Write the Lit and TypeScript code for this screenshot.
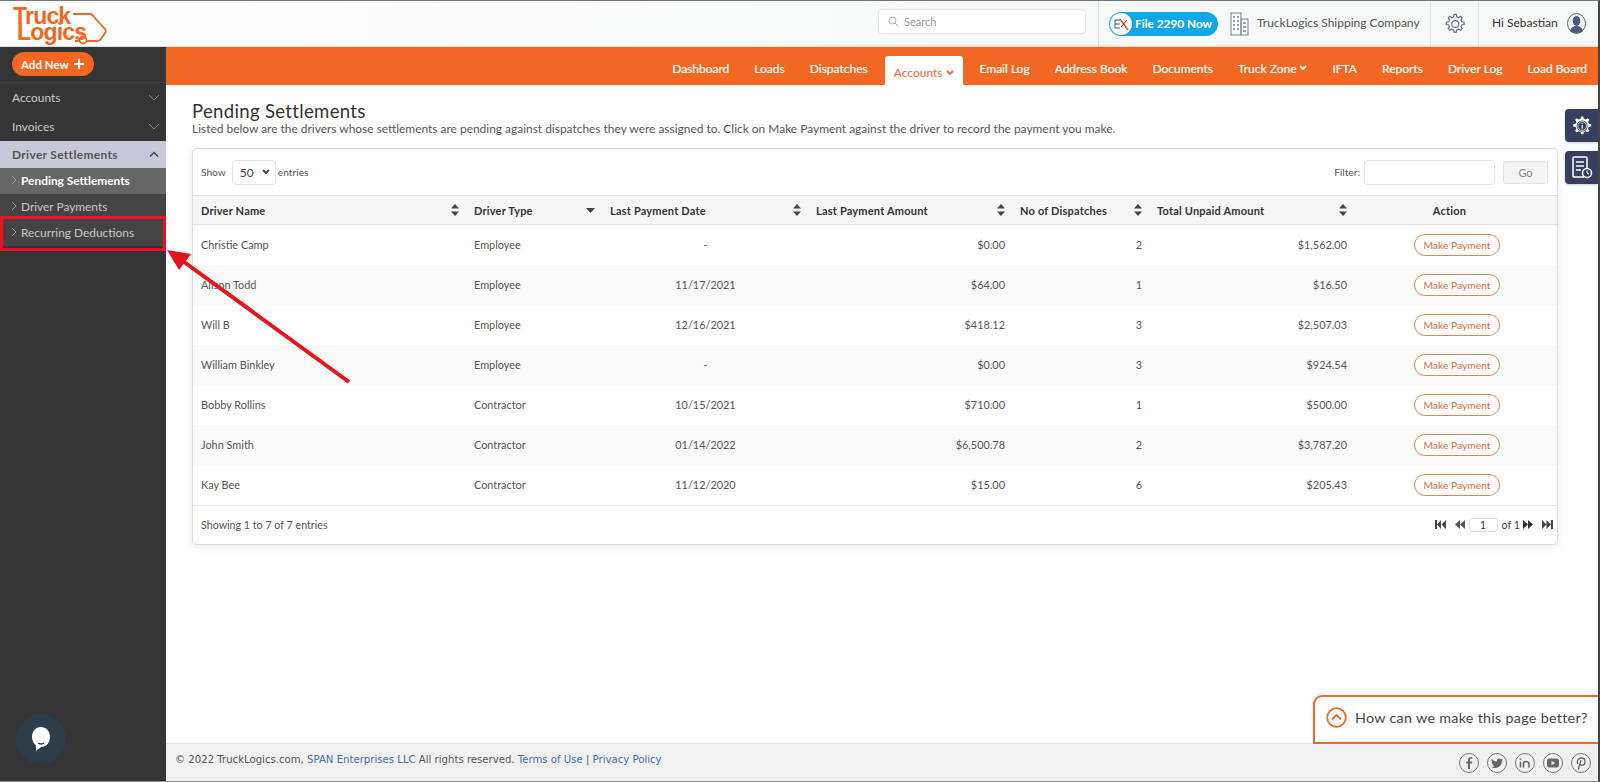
import { LitElement, html, css, svg } from "lit";
import { customElement } from "lit/decorators.js";

const chevDown = html`<svg class="chev" width="12" height="7" viewBox="0 0 12 7"><path d="M1 1l5 5 5-5" fill="none" stroke="currentColor" stroke-width="1"/></svg>`;
const chevUp = html`<svg class="chev" width="12" height="7" viewBox="0 0 12 7"><path d="M2 5.500l4-4 4 4" fill="none" stroke="currentColor" stroke-width="1.500"/></svg>`;
const caret = html`<svg width="8" height="6" viewBox="0 0 8 6"><path d="M1 1l3 3 3-3" fill="none" stroke="currentColor" stroke-width="1.800"/></svg>`;
const sortBoth = html`<svg width="8" height="12" viewBox="0 0 8 12"><path d="M4 0l4 4.500H0zM4 12l4-4.500H0z" fill="#444"/></svg>`;
const sortDown = html`<svg width="9" height="5" viewBox="0 0 9 5"><path d="M0 0h9L4.500 5z" fill="#444"/></svg>`;
const arrowSub = html`<svg width="6" height="10" viewBox="0 0 6 10"><path d="M1 1l4 4-4 4" fill="none" stroke="#999" stroke-width="1"/></svg>`;

const gear = svg`<path d="M10 1.500h2.500l.5 2.500 2 .9 2.200-1.400 1.800 1.800-1.400 2.200.9 2 2.500.5v2.500l-2.500.5-.9 2 1.400 2.200-1.800 1.800-2.200-1.400-2 .9-.5 2.500H10l-.5-2.500-2-.9-2.200 1.400-1.800-1.800 1.400-2.200-.9-2-2.500-.5v-2.500l2.500-.5.9-2-1.400-2.200 1.800-1.800 2.200 1.400 2-.9z" />`;

const rows = [
  ["Christie Camp", "Employee", "-", "$0.00", "2", "$1,562.00"],
  ["Alison Todd", "Employee", "11/17/2021", "$64.00", "1", "$16.50"],
  ["Will B", "Employee", "12/16/2021", "$418.12", "3", "$2,507.03"],
  ["William Binkley", "Employee", "-", "$0.00", "3", "$924.54"],
  ["Bobby Rollins", "Contractor", "10/15/2021", "$710.00", "1", "$500.00"],
  ["John Smith", "Contractor", "01/14/2022", "$6,500.78", "2", "$3,787.20"],
  ["Kay Bee", "Contractor", "11/12/2020", "$15.00", "6", "$205.43"],
];

const heads: [string, any][] = [
  ["Driver Name", sortBoth],
  ["Driver Type", sortDown],
  ["Last Payment Date", sortBoth],
  ["Last Payment Amount", sortBoth],
  ["No of Dispatches", sortBoth],
  ["Total Unpaid Amount", sortBoth],
];

const navItems: [string, boolean, boolean][] = [
  ["Dashboard", false, false],
  ["Loads", false, false],
  ["Dispatches", false, false],
  ["Accounts", true, true],
  ["Email Log", false, false],
  ["Address Book", false, false],
  ["Documents", false, false],
  ["Truck Zone", true, false],
  ["IFTA", false, false],
  ["Reports", false, false],
  ["Driver Log", false, false],
  ["Load Board", false, false],
];

@customElement("app-root")
export class AppRoot extends LitElement {
  static styles = css`
    :host {
      display: block;
      position: relative;
      width: 1600px;
      height: 782px;
      overflow: hidden;
      box-sizing: border-box;
      background: #fff;
      color: #444;
      font-family: "Lato", "Open Sans", sans-serif;
      font-size: 11.5px;
      border-top: 1px solid #777;
      border-right: 2px solid #444;
      border-bottom: 1px solid #888;
    }
    * { box-sizing: border-box; }
    .page { display: flex; flex-direction: column; height: 100%; }
    .header {
      display: flex; align-items: center; height: 46px; flex: none;
      background: linear-gradient(90deg, #fff, #f7f8f8 60%);
      border-bottom: 1px solid #ddd;
    }
    .logo { position: relative; width: 100px; height: 45px; margin-left: 13px; color: #f26722; }
    .logo svg { position: absolute; left: 0; top: 0; }
    .logo span {
      position: absolute; font-family: "Liberation Sans", sans-serif; font-weight: 700;
      font-size: 23px; line-height: 16px; letter-spacing: -0.8px;
    }
    .logo .l1 { left: 0; top: 7px; }
    .logo .l2 { left: 4px; top: 23px; }
    .search {
      margin: 0 0 5px auto; width: 208px; height: 25px; display: flex; align-items: center; gap: 5px;
      padding-left: 9px; background: #fff; border: 1px solid #e4e4e4; border-radius: 4px; color: #999; font-size: 11px;
    }
    .hdiv { width: 1px; height: 45px; background: #e2e2e2; flex: none; }
    .hdiv.first { margin-left: 12px; }
    .pill {
      margin-left: 10px; width: 109px; height: 24px; border-radius: 12px; background: #10a7e8; color: #fff;
      display: flex; align-items: center; gap: 3px; font-size: 11.8px; font-weight: 700; padding-left: 1px; white-space: nowrap;
    }
    .pill .ic { width: 22px; height: 22px; border-radius: 50%; background: #fff; flex: none; }
    .bld { margin-left: 12px; flex: none; }
    .company { margin: 0 0 2px 8px; width: 173px; font-size: 12px; color: #555; white-space: nowrap; }
    .gear { width: 47px; display: flex; justify-content: center; color: #667; }
    .hi { margin: 0 0 3px 13px; width: 75px; font-size: 12px; color: #333; white-space: nowrap; }
    .avatar { margin-right: 12px; flex: none; }
    .body { flex: 1; display: flex; min-height: 0; }
    .side { width: 166px; flex: none; background: #353535; color: #ccc; display: flex; flex-direction: column; font-size: 11.9px; }
    .addwrap { height: 36px; padding: 5px 0 0 12px; border-bottom: 1px solid #3d3d3d; }
    .add {
      width: 82px; height: 24px; border-radius: 12px; background: #f26722; color: #fff; font-weight: 700; font-size: 11.5px;
      display: flex; align-items: center; gap: 5px; padding-left: 9px;
    }
    .sec { height: 29px; display: flex; align-items: center; justify-content: space-between; padding: 0 6px 1px 12px; }
    .sec .chev { color: #888; }
    .sec.open { height: 27px; background: #c8c9d6; color: #555; font-weight: 700; letter-spacing: .35px; padding-bottom: 0; }
    .sec.open .chev { color: #444; }
    .sub { height: 26px; display: flex; align-items: center; gap: 4px; padding: 0 0 2px 11px; background: #444; color: #c8c8c8; }
    .sub.on { background: #666; color: #fff; font-weight: 700; }
    .chat { margin: auto 0 17px 16px; width: 50px; height: 50px; border-radius: 50%; background: #2d3d4a; display: flex; align-items: center; justify-content: center; }
    .main { flex: 1; display: flex; flex-direction: column; min-width: 0; }
    .nav { height: 38px; flex: none; background: #f26722; display: flex; justify-content: flex-end; align-items: flex-end; gap: 25px; padding-right: 11px; color: #fff; font-size: 12px; -webkit-text-stroke: 0.2px #fff; }
    .nav a { height: 38px; padding-top: 4px; display: flex; align-items: center; gap: 3px; white-space: nowrap; }
    .nav a.active { background: #fff; color: #e8683a; -webkit-text-stroke: 0; height: 29px; padding: 4px 9px 0; border-radius: 3px 3px 0 0; margin: 0 -8px 0 -8px; }
    .content { flex: 1; padding: 16px 40px 0 26px; min-height: 0; }
    h1 { margin: 0; font-size: 18.6px; line-height: 21px; font-weight: 400; color: #333; letter-spacing: 0.3px; }
    .desc { margin: 0 0 12px; font-size: 11.95px; line-height: 14px; color: #555; white-space: nowrap; }
    .card { border: 1px solid #ddd; border-radius: 5px; box-shadow: 0 3px 8px rgba(0,0,0,.08); background: #fff; }
    .tools { height: 46px; display: flex; align-items: center; padding: 0 9px 0 8px; gap: 6px; font-size: 10.2px; color: #555; }
    .sel { width: 44px; height: 25px; border: 1px solid #e2e2e2; border-radius: 4px; display: flex; align-items: center; justify-content: space-between; padding: 0 5px 0 7px; font-size: 12px; color: #444; }
    .ent { margin-left: -4px; }
    .tools .spacer { flex: 1; }
    .filter { width: 131px; height: 25px; border: 1px solid #e2e2e2; border-radius: 4px; margin-left: -2px; }
    .go { width: 45px; height: 23px; margin-left: 2px; border: 1px solid #e2e2e2; border-radius: 3px; background: #f4f4f4; color: #888; display: flex; align-items: center; justify-content: center; font-size: 11px; }
    table { width: 100%; border-collapse: collapse; table-layout: fixed; font-size: 10.9px; color: #555; }
    th { height: 29px; background: #f6f6f6; border-top: 1px solid #e2e2e2; border-bottom: 1px solid #e2e2e2; padding: 0 7px 0 8px; font-size: 11px; font-weight: 700; color: #333; text-align: left; letter-spacing: 0.2px; }
    th .in { display: flex; align-items: center; justify-content: space-between; white-space: nowrap; }
    th.act { text-align: center; padding-right: 20px; }
    td { height: 40px; padding: 0 7px 0 8px; white-space: nowrap; }
    tr:nth-child(even) td { background: #f9f9f9; }
    td.c { text-align: center; }
    td.act { text-align: left; padding: 0 0 0 60px; }
    td.r { text-align: right; }
    .btn { display: inline-flex; align-items: center; justify-content: center; width: 86px; height: 22px; border: 1px solid #e2825a; border-radius: 11px; color: #e0673a; font-size: 10.3px; background: #fff; }
    .foot { height: 39px; border-top: 1px solid #e8e8e8; display: flex; align-items: center; justify-content: space-between; padding: 0 4px 0 8px; font-size: 10.7px; color: #555; }
    .pager { display: flex; align-items: center; gap: 6px; color: #444; }
    .pg2 { margin-left: 3px; }
    .pg3 { margin-left: -3px; }
    .pager .box { width: 29px; height: 14px; border: 1px solid #ddd; border-radius: 3px; text-align: center; line-height: 12px; font-size: 11px; margin-left: -2px; }
    .foot .of { margin-left: -2px; }
    .footer { height: 38px; flex: none; background: #f0f0f0; border-top: 1px solid #e4e4e4; display: flex; align-items: center; justify-content: space-between; padding: 0 7px 0 9px; font-family: "DejaVu Sans", sans-serif; font-size: 10.15px; color: #555; white-space: nowrap; }
    .footer .txt { margin-bottom: 6px; }
    .footer b { font-weight: 400; color: #3f6fa8; }
    .social { display: flex; gap: 8px; margin-top: 1px; }
    .float { position: absolute; right: 0; width: 33px; height: 33px; background: #35405e; border-radius: 4px 0 0 4px; display: flex; align-items: center; justify-content: center; box-shadow: 0 1px 3px rgba(0,0,0,.2); }
    .f1 { top: 108px; }
    .f2 { top: 150px; }
    .feedback { position: absolute; right: 0; top: 694px; width: 285px; height: 49px; background: #fff; border: 2px solid #ea6a2d; border-right: 0; border-radius: 9px 0 0 0; display: flex; align-items: center; gap: 8px; padding: 0 0 4px 11px; font-size: 14.3px; color: #444; letter-spacing: .3px; white-space: nowrap; }
    .mark { position: absolute; left: 0; top: 215px; width: 166px; height: 35px; border: 3.5px solid #e8141f; }
    .arrow { position: absolute; left: 0; top: 0; pointer-events: none; }
  `;

  render() {
    return html`
      <div class="page">
        <header class="header">
          <div class="logo">
            <svg width="100" height="45" viewBox="0 0 100 45" fill="none" stroke="#f26722" stroke-width="1.800">
              <path d="M60 13h17c2 0 3 1 4 3l11 12c1 1 1 3 0 4l-4 6c-1 2-3 2-5 2H74M62 40h4"/>
              <circle cx="70" cy="39" r="3.500"/>
            </svg>
            <span class="l1">Truck</span><span class="l2">Logics</span>
          </div>
          <div class="search">
            <svg width="11" height="11" viewBox="0 0 11 11" fill="none" stroke="#aaa"><circle cx="4.500" cy="4.500" r="3.500"/><path d="M7 7l3.500 3.500"/></svg>
            Search
          </div>
          <div class="hdiv first"></div>
          <div class="pill">
            <span class="ic"><svg width="22" height="22" viewBox="0 0 22 22"><path d="M5 7h5M5 11h5M5 15h5M5 7v8" stroke="#456" fill="none"/><path d="M10 6l8 11" stroke="#e8541f" stroke-width="1.500"/><path d="M17 7l-6 7" stroke="#333"/></svg></span>
            File 2290 Now
          </div>
          <svg class="bld" width="19" height="24" viewBox="0 0 19 24" fill="none" stroke="#7b8494">
            <rect x="1" y="1" width="10" height="22"/><rect x="11" y="7" width="7" height="16"/>
            <path d="M3 5h2M7 5h2M3 9h2M7 9h2M3 13h2M7 13h2M3 17h2M7 17h2M13 11h3M13 15h3M13 19h3" stroke-width="1.500"/>
          </svg>
          <div class="company">TruckLogics Shipping Company</div>
          <div class="hdiv"></div>
          <div class="gear">
            <svg width="20" height="24" viewBox="0 0 22 24" fill="none" stroke="#667085" stroke-width="1.300">${gear}<circle cx="11.200" cy="12" r="3.800"/></svg>
          </div>
          <div class="hdiv"></div>
          <div class="hi">Hi Sebastian</div>
          <svg class="avatar" width="19" height="21" viewBox="0 0 19 21"><ellipse cx="9.500" cy="10.500" rx="9" ry="10" fill="#eef0f4" stroke="#667"/><ellipse cx="9.500" cy="8" rx="3.800" ry="5" fill="#4d5a78"/><path d="M3 18c1-4 4-5 6.500-5s5.500 1 6.500 5c-2 2.500-11 2.500-13 0z" fill="#4d5a78"/></svg>
        </header>
        <div class="body">
          <aside class="side">
            <div class="addwrap">
              <div class="add">Add New <svg width="10" height="10" viewBox="0 0 10 10"><path d="M5 0v10M0 5h10" stroke="#fff" stroke-width="2"/></svg></div>
            </div>
            <div class="sec">Accounts ${chevDown}</div>
            <div class="sec">Invoices ${chevDown}</div>
            <div class="sec open">Driver Settlements ${chevUp}</div>
            <div class="sub on">${arrowSub} Pending Settlements</div>
            <div class="sub">${arrowSub} Driver Payments</div>
            <div class="sub">${arrowSub} Recurring Deductions</div>
            <div class="chat">
              <svg width="20" height="26" viewBox="0 0 20 26"><path d="M10 1c5 0 9 4 9 10s-4 10-9 10l-5 4v-5.500C2.500 17.500 1 14.500 1 11 1 5 5 1 10 1z" fill="#fff"/><path d="M7 17c1.500 1.200 4.500 1.200 6 0" stroke="#2d3d4a" stroke-width="1.500" fill="none"/></svg>
            </div>
          </aside>
          <div class="main">
            <nav class="nav">
              ${navItems.map(([t, c, a]) => html`<a class=${a ? "active" : ""}>${t}${c ? caret : ""}</a>`)}
            </nav>
            <div class="content">
              <h1>Pending Settlements</h1>
              <p class="desc">Listed below are the drivers whose settlements are pending against dispatches they were assigned to. Click on Make Payment against the driver to record the payment you make.</p>
              <div class="card">
                <div class="tools">
                  Show <div class="sel">50 ${caret}</div> <span class="ent">entries</span>
                  <span class="spacer"></span>
                  Filter: <div class="filter"></div>
                  <div class="go">Go</div>
                </div>
                <table>
                  <colgroup>
                    <col style="width:273px"><col style="width:136px"><col style="width:206px"><col style="width:204px"><col style="width:137px"><col style="width:205px"><col>
                  </colgroup>
                  <thead>
                    <tr>
                      ${heads.map(([t, i]) => html`<th><div class="in">${t}${i}</div></th>`)}
                      <th class="act">Action</th>
                    </tr>
                  </thead>
                  <tbody>
                    ${rows.map((r) => html`<tr>
                      <td>${r[0]}</td><td>${r[1]}</td><td class="c">${r[2]}</td><td class="r">${r[3]}</td><td class="r">${r[4]}</td><td class="r">${r[5]}</td>
                      <td class="act"><span class="btn">Make Payment</span></td>
                    </tr>`)}
                  </tbody>
                </table>
                <div class="foot">
                  <span>Showing 1 to 7 of 7 entries</span>
                  <div class="pager">
                    <svg width="11" height="9" viewBox="0 0 11 9" fill="#444"><path d="M0 0h2v9H0zM6 0v9L2 4.500zM11 0v9L6.500 4.500z"/></svg>
                    <svg class="pg2" width="10" height="9" viewBox="0 0 10 9" fill="#555"><path d="M5 0v9L0 4.500zM10 0v9L5 4.500z"/></svg>
                    <div class="box">1</div>
                    <span class="of">of 1</span>
                    <svg class="pg3" width="10" height="9" viewBox="0 0 10 9" fill="#333"><path d="M0 0v9l5-4.500zM5 0v9l5-4.500z"/></svg>
                    <svg class="pg2" width="11" height="9" viewBox="0 0 11 9" fill="#444"><path d="M0 0v9l4.500-4.500zM4.500 0v9L9 4.500zM9 0h2v9H9z"/></svg>
                  </div>
                </div>
              </div>
            </div>
            <footer class="footer">
              <span class="txt">© 2022 TruckLogics.com, <b>SPAN Enterprises LLC</b> All rights reserved. <b>Terms of Use</b> | <b>Privacy Policy</b></span>
              <div class="social">
                <svg width="20" height="20" viewBox="0 0 20 20" fill="none" stroke="#777"><circle cx="10" cy="10" r="9.500"/><path d="M11 16v-5.500h2l.3-2H11V7c0-.8.4-1.200 1.200-1.200h1.100V4.200h-1.700C9.800 4.200 9 5.200 9 6.800v1.700H7.300v2H9V16z" fill="#666" stroke="none"/></svg>
                <svg width="20" height="20" viewBox="0 0 20 20" fill="none" stroke="#777"><circle cx="10" cy="10" r="9.500"/><path d="M16 6.500c-.5.200-1 .4-1.400.4.500-.3.900-.8 1.100-1.300-.5.300-1 .5-1.600.6a2.500 2.500 0 0 0-4.200 2.300c-2-.1-3.900-1.100-5.100-2.600-.7 1.100-.3 2.600.8 3.300-.4 0-.8-.1-1.100-.3 0 1.200.8 2.200 2 2.500-.4.100-.7.100-1.100 0 .3 1 1.300 1.700 2.300 1.700-1.100.8-2.400 1.200-3.700 1 3.400 2.200 10.800 1 11-6.600.5-.3 1-.8 1-1.500z" fill="#666" stroke="none"/></svg>
                <svg width="20" height="20" viewBox="0 0 20 20" fill="none" stroke="#777"><circle cx="10" cy="10" r="9.500"/><path d="M5.500 8.500v6M5.500 5.500v1.200M8.500 14.500v-6M8.500 11c0-3.300 5.500-3.500 5.500 0v3.500" stroke="#666" stroke-width="1.600"/></svg>
                <svg width="20" height="20" viewBox="0 0 20 20" fill="none" stroke="#777"><circle cx="10" cy="10" r="9.500"/><rect x="4" y="5.500" width="12" height="9" rx="2.500" fill="#666" stroke="none"/><path d="M8.500 7.800v4.400l3.600-2.200z" fill="#f0f0f0" stroke="none"/></svg>
                <svg width="20" height="20" viewBox="0 0 20 20" fill="none" stroke="#777"><circle cx="10" cy="10" r="9.500"/><path d="M8.500 11.500 7.500 16.500M7 11c-1.500-2.500 0-6 3.300-6 2.400 0 3.700 1.600 3.700 3.500 0 2.300-1.400 3.800-3 3.800-1 0-1.800-.6-2-1.300l.9-4" stroke="#666" stroke-width="1.300"/></svg>
              </div>
            </footer>
          </div>
        </div>
      </div>
      <div class="float f1">
        <svg width="22" height="22" viewBox="0 0 22 24"><g fill="#fff">${gear}</g><circle cx="11.200" cy="12" r="6" fill="#35405e"/><circle cx="11.200" cy="12" r="4.800" fill="none" stroke="#fff" stroke-width=".8"/><path d="M11.200 9v1.200M11.200 11v4" stroke="#fff" stroke-width="1.300"/></svg>
      </div>
      <div class="float f2">
        <svg width="22" height="24" viewBox="0 0 22 24" fill="none" stroke="#fff" stroke-width="1.500"><path d="M13 21H3a1 1 0 0 1-1-1V2a1 1 0 0 1 1-1h12a1 1 0 0 1 1 1v10"/><path d="M5 6h8M5 10h8M5 14h5"/><circle cx="16" cy="17" r="4.500" fill="#35405e"/><path d="M16 14.500V17l2 1" stroke-width="1"/></svg>
      </div>
      <div class="feedback">
        <svg width="21" height="21" viewBox="0 0 21 21" fill="none" stroke="#ea6a2d" stroke-width="1.800"><circle cx="10.500" cy="10.500" r="9.300"/><path d="M6 12.500l4.500-4.500 4.500 4.500"/></svg>
        How can we make this page better?
      </div>
      <div class="mark"></div>
      <svg class="arrow" width="400" height="400" viewBox="0 0 400 400">
        <path d="M349 381L180 258" stroke="#e8141f" stroke-width="4"/>
        <path d="M167 249l24 4-12 16z" fill="#e8141f"/>
      </svg>
    `;
  }
}
